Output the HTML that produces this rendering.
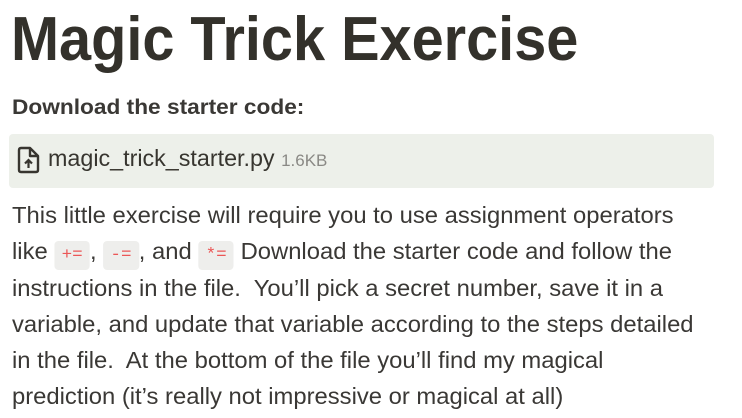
<!DOCTYPE html><html><head><style>
body{margin:0;background:#fff;font-family:"Liberation Sans",sans-serif;color:#37352f;width:742px;height:418px;overflow:hidden;position:relative}
.a{position:absolute;white-space:nowrap;transform-origin:left top}
h1{margin:0;font-size:62px;font-weight:bold;color:#33312b}
.c{background:#eeeeec;color:#eb5757;font-family:"Liberation Mono",monospace;font-size:17px;border-radius:4px;padding:5px 7px;}
.l{font-size:23px;color:#3a3835;transform:scaleX(1.035)}
</style></head><body>
<div class="a" style="left:11px;top:4px;transform:scaleX(0.93)"><h1>Magic Trick Exercise</h1></div>
<div class="a" style="left:12px;top:96px;font-size:21px;font-weight:bold;color:#3a3835;transform:scaleX(1.08)">Download the starter code:</div>
<div class="a" style="left:9px;top:134px;width:705px;height:54px;background:#edf0ea;border-radius:4px"></div>
<svg class="a" style="left:16px;top:146px" width="26" height="28" viewBox="0 0 26 28"><path d="M3 4 Q3 2 5 2 H14 L22 10 V24 Q22 26 20 26 H5 Q3 26 3 24 Z M14 2 V10 H22" fill="none" stroke="#37352f" stroke-width="2.4" stroke-linejoin="round"/><path d="M12.5 22 V14 M9 17.5 L12.5 14 L16 17.5" fill="none" stroke="#37352f" stroke-width="2.2"/></svg>
<div class="a" style="left:48px;top:145px;font-size:23.3px;color:#37352f">magic_trick_starter.py <span style="font-size:17px;color:#8a8985">1.6KB</span></div>
<div class="a l" style="left:12px;top:202px">This little exercise will require you to use assignment operators</div>
<div class="a l" style="left:12px;top:238px">like <span class="c">+=</span>, <span class="c">-=</span>, and <span class="c">*=</span> Download the starter code and follow the</div>
<div class="a l" style="left:12px;top:275px">instructions in the file.&nbsp; You’ll pick a secret number, save it in a</div>
<div class="a l" style="left:12px;top:311px">variable, and update that variable according to the steps detailed</div>
<div class="a l" style="left:12px;top:347px">in the file.&nbsp; At the bottom of the file you’ll find my magical</div>
<div class="a l" style="left:12px;top:383px">prediction (it’s really not impressive or magical at all)</div>
</body></html>
